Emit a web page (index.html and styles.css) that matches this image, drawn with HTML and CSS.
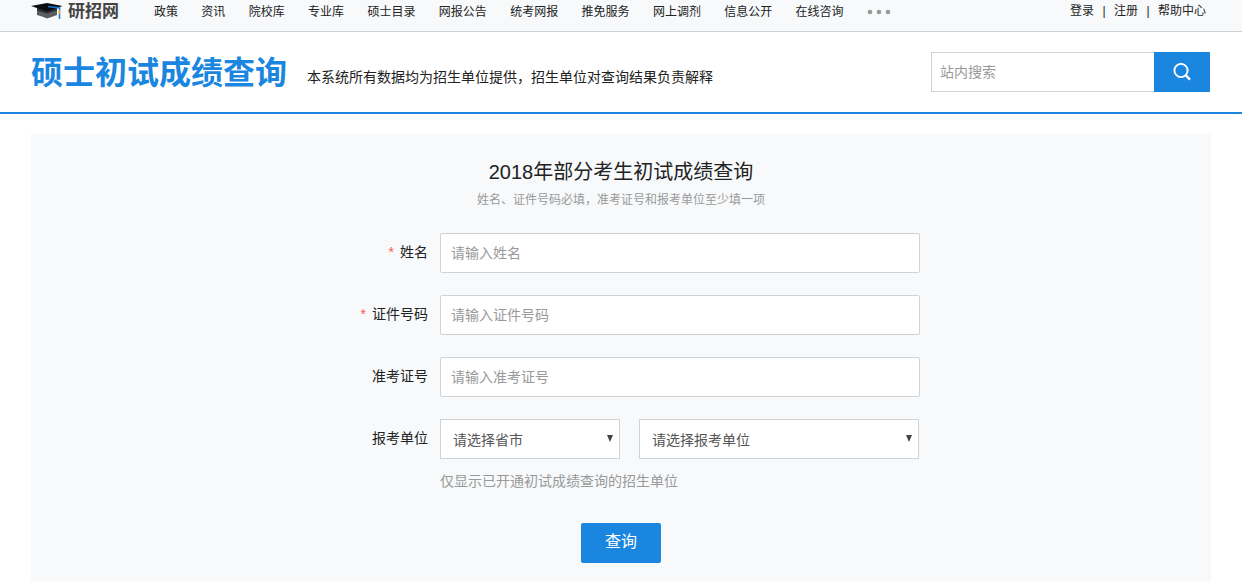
FILE: index.html
```html
<!DOCTYPE html>
<html lang="zh-CN">
<head>
<meta charset="utf-8">
<meta name="viewport" content="width=device-width, initial-scale=1">
<title>硕士初试成绩查询</title>
<link rel="stylesheet" href="styles.css">
</head>
<body>
<div class="topbar">
  <div class="container topbar-inner">
    <a class="logo" href="#">
      <svg class="logo-cap" viewBox="0 0 32 18" aria-hidden="true">
        <path d="M6 6H26V13Q20 15 16 16.500 11 14 6 13Z" fill="#5a5c5e"/>
        <path d="M6 6H26V8.500L16 11.500 6 8.500Z" fill="#2c2f33"/>
        <path d="M0 4 16 1 31.500 4 16 9.500Z" fill="#0b0d10"/>
        <path d="M17 4.500 28.500 6V17" fill="none" stroke="#1678d0" stroke-width="1.500"/>
        <path d="M28.500 8V12" stroke="#e0b23a" stroke-width="1.500"/>
      </svg>
      <span class="logo-text">研招网</span>
    </a>
    <nav class="nav">
      <a href="#">政策</a>
      <a href="#">资讯</a>
      <a href="#">院校库</a>
      <a href="#">专业库</a>
      <a href="#">硕士目录</a>
      <a href="#">网报公告</a>
      <a href="#">统考网报</a>
      <a href="#">推免服务</a>
      <a href="#">网上调剂</a>
      <a href="#">信息公开</a>
      <a href="#">在线咨询</a>
      <a href="#" aria-label="更多"><svg class="more" viewBox="0 0 24 6" aria-hidden="true"><g fill="#999"><circle cx="3" cy="3" r="2.300"/><circle cx="12" cy="3" r="2.300"/><circle cx="21" cy="3" r="2.300"/></g></svg></a>
    </nav>
    <div class="account">
      <a href="#">登录</a><span>|</span><a href="#">注册</a><span>|</span><a href="#">帮助中心</a>
    </div>
  </div>
</div>
<header class="header">
  <div class="container header-inner">
    <h1 class="title">硕士初试成绩查询</h1>
    <p class="notice">本系统所有数据均为招生单位提供，招生单位对查询结果负责解释</p>
    <form class="search">
      <input class="search-input" type="text" placeholder="站内搜索" aria-label="站内搜索">
      <button class="search-button" type="submit" aria-label="搜索">
        <svg class="search-icon" viewBox="0 0 18 18" aria-hidden="true"><circle cx="8" cy="7.500" r="6.600" fill="none" stroke="#fff" stroke-width="1.900"/><path d="M12.600 12.200 17 16.600" stroke="#fff" stroke-width="2.400"/></svg>
      </button>
    </form>
  </div>
</header>
<main class="container panel">
  <h2 class="panel-title">2018年部分考生初试成绩查询</h2>
  <p class="panel-tip">姓名、证件号码必填，准考证号和报考单位至少填一项</p>
  <form class="form">
    <label class="label" for="name"><span class="required">*</span>姓名</label>
    <input class="field" id="name" type="text" placeholder="请输入姓名">
    <label class="label" for="idno"><span class="required">*</span>证件号码</label>
    <input class="field" id="idno" type="text" placeholder="请输入证件号码">
    <label class="label" for="ticket">准考证号</label>
    <input class="field" id="ticket" type="text" placeholder="请输入准考证号">
    <label class="label" for="province">报考单位</label>
    <div class="selects">
      <div class="select-box province">
        <select class="select" id="province"><option>请选择省市</option></select>
        <svg class="arrow" viewBox="0 0 6 7" aria-hidden="true"><path d="M0 0H6L3 7Z" fill="#444"/></svg>
      </div>
      <div class="select-box unit">
        <select class="select" aria-label="报考单位"><option>请选择报考单位</option></select>
        <svg class="arrow" viewBox="0 0 6 7" aria-hidden="true"><path d="M0 0H6L3 7Z" fill="#444"/></svg>
      </div>
    </div>
    <p class="hint">仅显示已开通初试成绩查询的招生单位</p>
    <button class="submit" type="submit">查询</button>
  </form>
</main>
</body>
</html>
```
FILE: styles.css
```css
* {
  box-sizing: border-box;
}

body {
  margin: 0;
  background: #fff;
  color: #222;
  font: 14px/20px "Liberation Sans", "Noto Sans CJK SC", sans-serif;
}

h1, h2, p {
  margin: 0;
  font-weight: normal;
}

a {
  color: #222;
  text-decoration: none;
}

input, select, button {
  margin: 0;
  font: inherit;
}

.container {
  max-width: 1180px;
  margin: 0 auto;
}

.topbar {
  background: #f7f9fb;
  border-bottom: 1px solid #d0d3d6;
  font-size: 12px;
}

.topbar-inner {
  display: flex;
  align-items: flex-start;
  height: 31px;
}

.logo {
  display: flex;
  gap: 5px;
  width: 113px;
}

.logo-cap {
  width: 32px;
  height: 18px;
  margin-top: 2px;
}

.logo-text {
  color: #444;
  font-size: 17px;
  font-weight: bold;
  line-height: 24px;
  white-space: nowrap;
}

.nav {
  padding-top: 2px;
  white-space: nowrap;
}

.nav a {
  display: inline-block;
  padding: 0 10px;
}

.more {
  width: 24px;
  height: 6px;
  vertical-align: 1px;
}

.account {
  display: flex;
  margin-left: auto;
  padding: 1px 5px 0 0;
  white-space: nowrap;
}

.account span {
  width: 20px;
  text-align: center;
}

.header {
  border-bottom: 2px solid #1a86e0;
}

.header-inner {
  display: flex;
  align-items: center;
  height: 80px;
}

.title {
  padding-top: 2px;
  color: #1a86e0;
  font-size: 32px;
  font-weight: bold;
  line-height: 40px;
  white-space: nowrap;
}

.notice {
  margin-left: 20px;
  padding-top: 10px;
  white-space: nowrap;
}

.search {
  display: flex;
  width: 279px;
  height: 40px;
  margin: 0 1px 0 auto;
}

.search-input {
  flex: 1;
  min-width: 0;
  padding: 0 8px;
  border: 1px solid #d0d3d6;
  border-right: 0;
  border-radius: 0;
  background: #fff;
}

::placeholder {
  color: #999;
  opacity: 1;
}

.search-button {
  display: flex;
  align-items: center;
  justify-content: center;
  width: 56px;
  padding: 0;
  border: 0;
  background: #1a86e0;
}

.search-icon {
  width: 18px;
  height: 18px;
}

.panel {
  margin-top: 20px;
  padding: 24px 0 19px;
  background: #f7f9fb;
}

.panel-title {
  font-size: 20px;
  line-height: 28px;
  text-align: center;
}

.panel-tip {
  padding-top: 4px;
  color: #999;
  font-size: 12px;
  text-align: center;
}

.form {
  display: grid;
  grid-template-columns: 1fr 480px;
  column-gap: 12px;
  row-gap: 22px;
  max-width: 598px;
  margin: 23px auto 0;
}

.label {
  line-height: 38px;
  text-align: right;
  white-space: nowrap;
}

.required {
  margin-right: 6px;
  color: #ff5a4c;
}

.field {
  width: 100%;
  height: 40px;
  padding: 0 10px;
  border: 1px solid #d0d3d6;
  border-radius: 2px;
  background: #fff;
}

.selects {
  display: flex;
  gap: 19px;
}

.select-box {
  position: relative;
}

.province {
  width: 180px;
}

.unit {
  width: 280px;
}

.select {
  width: 100%;
  height: 40px;
  padding: 2px 24px 0 12px;
  border: 1px solid #d0d3d6;
  border-radius: 0;
  background: #fff;
  color: #555;
  appearance: none;
}

.arrow {
  position: absolute;
  top: 16px;
  right: 7px;
  width: 6px;
  height: 7px;
  pointer-events: none;
}

.hint {
  grid-column: 2;
  margin-top: -10px;
  color: #999;
}

.submit {
  grid-column: 1 / -1;
  justify-self: center;
  width: 80px;
  height: 40px;
  margin-top: 10px;
  padding: 0 0 2px;
  border: 0;
  border-radius: 2px;
  background: #1a86e0;
  color: #fff;
  font-size: 16px;
}
```
